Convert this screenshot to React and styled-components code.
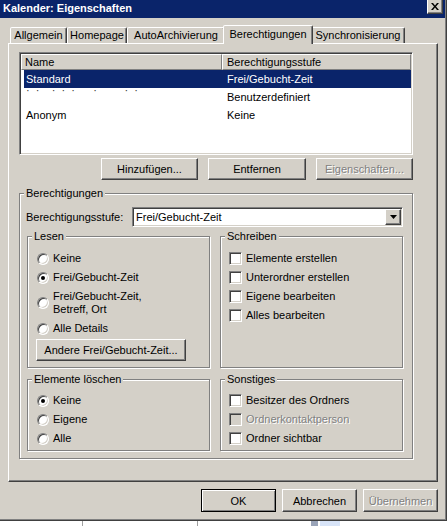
import React from 'react';
import styled, { createGlobalStyle, css } from 'styled-components';

// classic windows palette
const FACE = '#d4d0c8';
const SHADOW = '#808080';
const DARK = '#404040';
const NAVY = '#0a246a';

const GlobalStyle = createGlobalStyle`
    html, body {
        margin: 0;
        padding: 0;
        background: #fff;
    }
    body {
        font-family: Tahoma, "Liberation Sans", Arial, sans-serif;
        font-size: 11px;
        color: #000;
    }
`;

const raised = css`
    border: 1px solid;
    border-color: #fff ${DARK} ${DARK} #fff;
    box-shadow: inset -1px -1px ${SHADOW};
`;

const sunken = css`
    border: 1px solid;
    border-color: ${SHADOW} #fff #fff ${SHADOW};
    box-shadow: inset 1px 1px ${DARK}, inset -1px -1px ${FACE};
`;

const disabledText = css`
    color: ${SHADOW};
    text-shadow: 1px 1px #fff;
`;

const Window = styled.div`
    width: 447px;
    height: 521px;
    box-sizing: border-box;
    background: ${FACE};
    border-right: 1px solid ${DARK};
    border-bottom: 1px solid ${DARK};
    box-shadow: inset -1px -1px ${SHADOW};
    display: flex;
    flex-direction: column;
`;

const TitleBar = styled.div`
    width: 445px;
    height: 18px;
    box-sizing: border-box;
    padding: 0 2px 0 3px;
    background: ${NAVY};
    display: flex;
    align-items: flex-start;
    justify-content: space-between;
`;

const Title = styled.span`
    color: #fff;
    font-weight: bold;
    line-height: 17px;
`;

const CloseButton = styled.div`
    width: 16px;
    height: 14px;
    box-sizing: border-box;
    background: ${FACE};
    ${raised};
    border-top: none;
    display: flex;
    align-items: center;
    justify-content: center;
`;

const Body = styled.div`
    width: 430px;
    margin-left: 8px;
    display: flex;
    flex-direction: column;
`;

const TabStrip = styled.div`
    display: flex;
    align-items: flex-end;
    height: 18px;
    margin-top: 7px;
    padding-left: 2px;
`;

const Tab = styled.div`
    position: relative;
    width: ${(p) => p.$w}px;
    height: ${(p) => (p.$active ? 19 : 16)}px;
    margin: ${(p) => (p.$active ? '0 -2px -1px -2px' : '0')};
    z-index: ${(p) => (p.$active ? 1 : 0)};
    box-sizing: border-box;
    background: ${FACE};
    border: 1px solid;
    border-bottom: none;
    border-color: #fff ${DARK} transparent #fff;
    border-radius: 2px 2px 0 0;
    box-shadow: inset -1px 0 ${SHADOW};
    display: flex;
    align-items: center;
    justify-content: center;
    padding-bottom: ${(p) => (p.$active ? 2 : 1)}px;
    white-space: nowrap;
`;

const TabPanel = styled.div`
    height: 439px;
    box-sizing: border-box;
    border: 1px solid;
    border-color: #fff ${DARK} ${DARK} #fff;
    box-shadow: inset -1px -1px ${SHADOW};
    padding: 8px 0 0 10px;
    display: flex;
    flex-direction: column;
`;

const ListView = styled.div`
    width: 394px;
    height: 103px;
    box-sizing: border-box;
    background: #fff;
    ${sunken};
    padding: 1px;
`;

const ListHeader = styled.div`
    display: grid;
    grid-template-columns: 201px 189px;
    height: 16px;
`;

const HeaderCell = styled.div`
    box-sizing: border-box;
    background: ${FACE};
    border: 1px solid;
    border-color: #fff ${SHADOW} ${SHADOW} #fff;
    padding-left: ${(p) => p.$pad}px;
    line-height: 14px;
`;

const ListRow = styled.div`
    display: grid;
    grid-template-columns: 198px 1fr;
    width: 387px;
    height: 18px;
    margin-left: 3px;
    line-height: 18px;
    background: ${(p) => (p.$selected ? NAVY : 'transparent')};
    color: ${(p) => (p.$selected ? '#fff' : '#000')};
`;

const ListCell = styled.div`
    padding-left: ${(p) => p.$pad}px;
    white-space: nowrap;
`;

// the name in the second row is blacked out in the screenshot, only a few dots remain
const Masked = styled.span`
    display: block;
    height: 6px;
    line-height: 6px;
    margin-top: -1px;
    white-space: pre;
    color: #333;
`;

const ButtonRow = styled.div`
    width: ${(p) => (p.$w ? `${p.$w}px` : 'auto')};
    display: flex;
    justify-content: ${(p) => (p.$start ? 'flex-start' : 'flex-end')};
    gap: ${(p) => p.$gap || 10}px;
    margin-top: ${(p) => p.$top || 0}px;
    padding-left: ${(p) => p.$indent || 0}px;
`;

const Button = styled.div`
    width: ${(p) => p.$w}px;
    height: ${(p) => p.$h || 22}px;
    box-sizing: border-box;
    background: ${FACE};
    ${(p) =>
        p.$default
            ? css`
                  border: 1px solid #000;
                  box-shadow: inset 1px 1px #fff, inset -1px -1px ${SHADOW};
              `
            : raised};
    display: flex;
    align-items: center;
    justify-content: center;
    white-space: nowrap;
    ${(p) => p.$disabled && disabledText};
`;

const Spacer = styled.div`
    height: ${(p) => p.$h}px;
`;

const GroupBox = styled.div`
    position: relative;
    box-sizing: border-box;
    width: ${(p) => p.$w}px;
    height: ${(p) => p.$h}px;
    border: 1px solid ${SHADOW};
    box-shadow: inset 1px 1px #fff, 1px 1px #fff;
    padding: ${(p) => p.$pad};
    display: flex;
    flex-direction: column;
`;

const Caption = styled.span`
    position: absolute;
    top: -7px;
    left: 4px;
    padding: 0 2px;
    line-height: 13px;
    background: ${FACE};
`;

const ComboRow = styled.div`
    display: flex;
    align-items: center;
    justify-content: space-between;
    width: 377px;
    margin-left: -1px;
`;

const Combo = styled.div`
    width: 271px;
    height: 20px;
    box-sizing: border-box;
    background: #fff;
    ${sunken};
    padding: 1px;
    display: flex;
    align-items: center;
`;

const ComboText = styled.span`
    flex: 1;
    padding-left: 2px;
`;

const DropButton = styled.div`
    width: 16px;
    height: 16px;
    box-sizing: border-box;
    background: ${FACE};
    ${raised};
    display: flex;
    align-items: center;
    justify-content: center;
`;

const SubGrid = styled.div`
    display: grid;
    grid-template-columns: 183px 183px;
    column-gap: 10px;
    row-gap: 11px;
    margin-top: 9px;
`;

const OptionRow = styled.div`
    display: flex;
    align-items: center;
    min-height: ${(p) => p.$h || 19}px;
    padding-left: ${(p) => p.$indent}px;
    line-height: 13px;
`;

const Radio = styled.span`
    position: relative;
    flex: none;
    width: 12px;
    height: 12px;
    box-sizing: border-box;
    border-radius: 50%;
    background: #fff;
    border: 1px solid;
    border-color: ${SHADOW} #fff #fff ${SHADOW};
    box-shadow: inset 1px 1px ${DARK}, inset -1px -1px ${FACE};
    margin-right: 4px;

    &::after {
        content: '';
        display: ${(p) => (p.$checked ? 'block' : 'none')};
        position: absolute;
        left: 3px;
        top: 3px;
        width: 4px;
        height: 4px;
        border-radius: 50%;
        background: #000;
    }
`;

const Check = styled.span`
    flex: none;
    width: 13px;
    height: 13px;
    box-sizing: border-box;
    background: ${(p) => (p.$disabled ? FACE : '#fff')};
    ${sunken};
    margin-right: 4px;
`;

const OptionLabel = styled.span`
    ${(p) => p.$disabled && disabledText};
`;

const Backdrop = styled.div`
    display: flex;
    height: 5px;
`;

const BackdropLine = styled.div`
    width: ${(p) => p.$w}px;
    margin-left: ${(p) => p.$left}px;
    background: ${(p) => p.$color};
`;

const tabs = [
    { label: 'Allgemein', w: 57 },
    { label: 'Homepage', w: 60 },
    { label: 'AutoArchivierung', w: 98 },
    { label: 'Berechtigungen', w: 90, active: true },
    { label: 'Synchronisierung', w: 94 },
];

const RadioOption = ({ checked, children, h }) => (
    <OptionRow $indent={9} $h={h}>
        <Radio $checked={checked} />
        <OptionLabel>{children}</OptionLabel>
    </OptionRow>
);

const CheckOption = ({ disabled, children }) => (
    <OptionRow $indent={8}>
        <Check $disabled={disabled} />
        <OptionLabel $disabled={disabled}>{children}</OptionLabel>
    </OptionRow>
);

const App = () => (
    <>
        <GlobalStyle />
        <Window>
            <TitleBar>
                <Title>Kalender: Eigenschaften</Title>
                <CloseButton>
                    <svg width="8" height="7" viewBox="0 0 8 7">
                        <path d="M0 0h2l2 2.5L6 0h2L5 3.5 8 7H6L4 4.5 2 7H0l3-3.5z" fill="#000" />
                    </svg>
                </CloseButton>
            </TitleBar>
            <Body>
                <TabStrip>
                    {tabs.map((t) => (
                        <Tab key={t.label} $w={t.w} $active={t.active}>
                            {t.label}
                        </Tab>
                    ))}
                </TabStrip>
                <TabPanel>
                    <ListView>
                        <ListHeader>
                            <HeaderCell $pad={3}>Name</HeaderCell>
                            <HeaderCell $pad={4}>Berechtigungsstufe</HeaderCell>
                        </ListHeader>
                        <ListRow $selected>
                            <ListCell $pad={2}>Standard</ListCell>
                            <ListCell $pad={5}>Frei/Gebucht-Zeit</ListCell>
                        </ListRow>
                        <ListRow>
                            <ListCell $pad={2}>
                                <Masked>{'·  ·    ·  ·  ·      ·         ·  ·'}</Masked>
                            </ListCell>
                            <ListCell $pad={5}>Benutzerdefiniert</ListCell>
                        </ListRow>
                        <ListRow>
                            <ListCell $pad={2}>Anonym</ListCell>
                            <ListCell $pad={5}>Keine</ListCell>
                        </ListRow>
                    </ListView>

                    <ButtonRow $w={394} $top={3}>
                        <Button $w={97}>Hinzufügen...</Button>
                        <Button $w={98}>Entfernen</Button>
                        <Button $w={97} $disabled>
                            Eigenschaften...
                        </Button>
                    </ButtonRow>

                    <Spacer $h={13} />

                    <GroupBox $w={394} $h={266} $pad="13px 0 0 7px">
                        <Caption>Berechtigungen</Caption>
                        <ComboRow>
                            <span>Berechtigungsstufe:</span>
                            <Combo>
                                <ComboText>Frei/Gebucht-Zeit</ComboText>
                                <DropButton>
                                    <svg width="7" height="4" viewBox="0 0 7 4">
                                        <path d="M0 0h7L3.5 4z" fill="#000" />
                                    </svg>
                                </DropButton>
                            </Combo>
                        </ComboRow>

                        <SubGrid>
                            <GroupBox $w={183} $h={132} $pad="12px 0 0 0">
                                <Caption>Lesen</Caption>
                                <RadioOption>Keine</RadioOption>
                                <RadioOption checked>Frei/Gebucht-Zeit</RadioOption>
                                <RadioOption h={32}>
                                    Frei/Gebucht-Zeit,
                                    <br />
                                    Betreff, Ort
                                </RadioOption>
                                <RadioOption>Alle Details</RadioOption>
                                <ButtonRow $start $indent={8} $top={1}>
                                    <Button $w={150}>Andere Frei/Gebucht-Zeit...</Button>
                                </ButtonRow>
                            </GroupBox>

                            <GroupBox $w={183} $h={132} $pad="12px 0 0 0">
                                <Caption>Schreiben</Caption>
                                <CheckOption>Elemente erstellen</CheckOption>
                                <CheckOption>Unterordner erstellen</CheckOption>
                                <CheckOption>Eigene bearbeiten</CheckOption>
                                <CheckOption>Alles bearbeiten</CheckOption>
                            </GroupBox>

                            <GroupBox $w={183} $h={72} $pad="11px 0 0 0">
                                <Caption>Elemente löschen</Caption>
                                <RadioOption checked>Keine</RadioOption>
                                <RadioOption>Eigene</RadioOption>
                                <RadioOption>Alle</RadioOption>
                            </GroupBox>

                            <GroupBox $w={183} $h={72} $pad="11px 0 0 0">
                                <Caption>Sonstiges</Caption>
                                <CheckOption>Besitzer des Ordners</CheckOption>
                                <CheckOption disabled>Ordnerkontaktperson</CheckOption>
                                <CheckOption>Ordner sichtbar</CheckOption>
                            </GroupBox>
                        </SubGrid>
                    </GroupBox>
                </TabPanel>

                <ButtonRow $w={430} $top={7} $gap={6}>
                    <Button $w={75} $h={23} $default>
                        OK
                    </Button>
                    <Button $w={75} $h={23}>
                        Abbrechen
                    </Button>
                    <Button $w={75} $h={23} $disabled>
                        Übernehmen
                    </Button>
                </ButtonRow>
            </Body>
        </Window>
        <Backdrop>
            <BackdropLine $left={82} $w={1} $color="#a0a0a0" />
            <BackdropLine $left={114} $w={1} $color="#a0a0a0" />
            <BackdropLine $left={113} $w={7} $color="#9aa4b8" />
            <BackdropLine $left={2} $w={20} $color="#d8e4f8" />
        </Backdrop>
    </>
);

export default App;
